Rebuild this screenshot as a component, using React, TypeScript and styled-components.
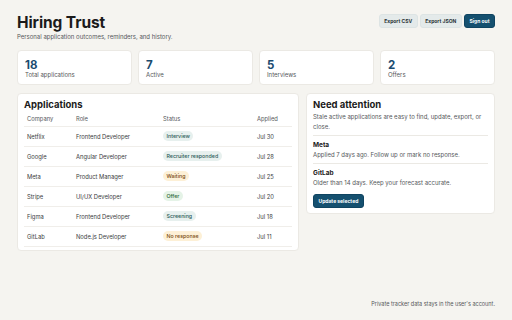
import React from 'react';
import styled, { createGlobalStyle } from 'styled-components';

const GlobalStyle = createGlobalStyle`
  * {
    box-sizing: border-box;
  }
  body {
    margin: 0;
    background: #f5f4f0;
    font-family: Inter, 'Noto Sans', sans-serif;
    color: #1b1b1b;
  }
`;

const Page = styled.div`
  min-height: 100vh;
  display: flex;
  flex-direction: column;
  padding: 13px 17px 13px;
`;

const Header = styled.header`
  display: flex;
  justify-content: space-between;
  align-items: flex-start;
`;

const Title = styled.h1`
  margin: 0;
  font-size: 15.5px;
  line-height: 19px;
  font-weight: 700;
  letter-spacing: -0.1px;
`;

const Subtitle = styled.p`
  margin: 0;
  font-size: 6px;
  line-height: 9px;
  color: #55585b;
`;

const Actions = styled.div`
  display: flex;
  gap: 2px;
  margin-top: 1px;
`;

const Button = styled.button<{ primary?: boolean }>`
  height: 14px;
  padding: 0 4.5px;
  border-radius: 3px;
  border: 1px solid ${({ primary }) => (primary ? '#0f4461' : '#dde4e4')};
  background: ${({ primary }) => (primary ? '#15506f' : '#e4eaea')};
  color: ${({ primary }) => (primary ? '#ffffff' : '#2a3236')};
  font-family: inherit;
  font-size: 5px;
  font-weight: 700;
  cursor: pointer;
`;

const Stats = styled.section`
  display: grid;
  grid-template-columns: repeat(4, 1fr);
  gap: 6px;
  margin-top: 9px;
`;

const Card = styled.div`
  background: #ffffff;
  border: 1px solid #ebe9e4;
  border-radius: 4px;
`;

const StatCard = styled(Card)`
  height: 35px;
  padding: 8px 7px 0;
`;

const StatNumber = styled.div`
  font-size: 11.5px;
  line-height: 12px;
  font-weight: 700;
  color: #1b4b6f;
`;

const StatLabel = styled.div`
  font-size: 6px;
  line-height: 8px;
  color: #55585b;
`;

const Main = styled.main`
  display: grid;
  grid-template-columns: 282fr 189fr;
  gap: 7px;
  margin-top: 8px;
  align-items: start;
`;

const Panel = styled(Card)<{ tight?: boolean }>`
  padding: 5px 6px ${({ tight }) => (tight ? '3px' : '5px')};
`;

const PanelTitle = styled.h2`
  margin: 0;
  font-size: 9.5px;
  line-height: 12px;
  font-weight: 700;
`;

const Table = styled.table`
  width: 100%;
  border-collapse: collapse;
  margin-top: 1px;
  font-size: 5.8px;
  color: #3a3d40;
`;

const Th = styled.th<{ w?: number }>`
  text-align: left;
  font-weight: 400;
  color: #55585b;
  height: 14px;
  padding: 0 3px;
  width: ${({ w }) => (w ? `${w}px` : 'auto')};
  border-bottom: 1px solid #f0eeea;
`;

const Td = styled.td`
  height: 20px;
  padding: 0 3px;
  border-bottom: 1px solid #f0eeea;
`;

const tones = {
  teal: { bg: '#e7f0ee', fg: '#2c5b58' },
  amber: { bg: '#fdf0d6', fg: '#7a4b12' },
  green: { bg: '#e5f3e7', fg: '#2e6a3b' },
};

type Tone = keyof typeof tones;

const Badge = styled.span<{ tone: Tone }>`
  display: inline-block;
  height: 10px;
  line-height: 10px;
  padding: 0 3.5px;
  border-radius: 5px;
  font-size: 5.3px;
  font-weight: 500;
  background: ${({ tone }) => tones[tone].bg};
  color: ${({ tone }) => tones[tone].fg};
`;

const Lead = styled.p`
  margin: 1px 0 0;
  font-size: 6px;
  line-height: 9.5px;
  color: #55585b;
`;

const Item = styled.div`
  border-top: 1px solid #ebe9e4;
  margin-top: 4px;
  padding-top: 4px;
`;

const ItemName = styled.div`
  font-size: 6.5px;
  line-height: 10px;
  font-weight: 700;
`;

const ItemText = styled.div`
  font-size: 6px;
  line-height: 9px;
  color: #55585b;
`;

const UpdateButton = styled(Button)`
  margin-top: 6px;
`;

const Footer = styled.footer`
  margin-top: auto;
  text-align: right;
  font-size: 5.5px;
  color: #55585b;
`;

const stats = [
  { value: 18, label: 'Total applications' },
  { value: 7, label: 'Active' },
  { value: 5, label: 'Interviews' },
  { value: 2, label: 'Offers' },
];

const rows: { company: string; role: string; status: string; tone: Tone; applied: string }[] = [
  { company: 'Netflix', role: 'Frontend Developer', status: 'Interview', tone: 'teal', applied: 'Jul 30' },
  { company: 'Google', role: 'Angular Developer', status: 'Recruiter responded', tone: 'teal', applied: 'Jul 28' },
  { company: 'Meta', role: 'Product Manager', status: 'Waiting', tone: 'amber', applied: 'Jul 25' },
  { company: 'Stripe', role: 'UI/UX Developer', status: 'Offer', tone: 'green', applied: 'Jul 20' },
  { company: 'Figma', role: 'Frontend Developer', status: 'Screening', tone: 'teal', applied: 'Jul 18' },
  { company: 'GitLab', role: 'Node.js Developer', status: 'No response', tone: 'amber', applied: 'Jul 11' },
];

const App = () => (
  <>
    <GlobalStyle />
    <Page>
      <Header>
        <div>
          <Title>Hiring Trust</Title>
          <Subtitle>Personal application outcomes, reminders, and history.</Subtitle>
        </div>
        <Actions>
          <Button>Export CSV</Button>
          <Button>Export JSON</Button>
          <Button primary>Sign out</Button>
        </Actions>
      </Header>

      <Stats>
        {stats.map((s) => (
          <StatCard key={s.label}>
            <StatNumber>{s.value}</StatNumber>
            <StatLabel>{s.label}</StatLabel>
          </StatCard>
        ))}
      </Stats>

      <Main>
        <Panel tight>
          <PanelTitle>Applications</PanelTitle>
          <Table>
            <thead>
              <tr>
                <Th w={49}>Company</Th>
                <Th w={87}>Role</Th>
                <Th w={94}>Status</Th>
                <Th>Applied</Th>
              </tr>
            </thead>
            <tbody>
              {rows.map((r) => (
                <tr key={r.company}>
                  <Td>{r.company}</Td>
                  <Td>{r.role}</Td>
                  <Td>
                    <Badge tone={r.tone}>{r.status}</Badge>
                  </Td>
                  <Td>{r.applied}</Td>
                </tr>
              ))}
            </tbody>
          </Table>
        </Panel>

        <Panel>
          <PanelTitle>Need attention</PanelTitle>
          <Lead>Stale active applications are easy to find, update, export, or close.</Lead>
          <Item>
            <ItemName>Meta</ItemName>
            <ItemText>Applied 7 days ago. Follow up or mark no response.</ItemText>
          </Item>
          <Item>
            <ItemName>GitLab</ItemName>
            <ItemText>Older than 14 days. Keep your forecast accurate.</ItemText>
          </Item>
          <UpdateButton primary>Update selected</UpdateButton>
        </Panel>
      </Main>

      <Footer>Private tracker data stays in the user's account.</Footer>
    </Page>
  </>
);

export default App;
